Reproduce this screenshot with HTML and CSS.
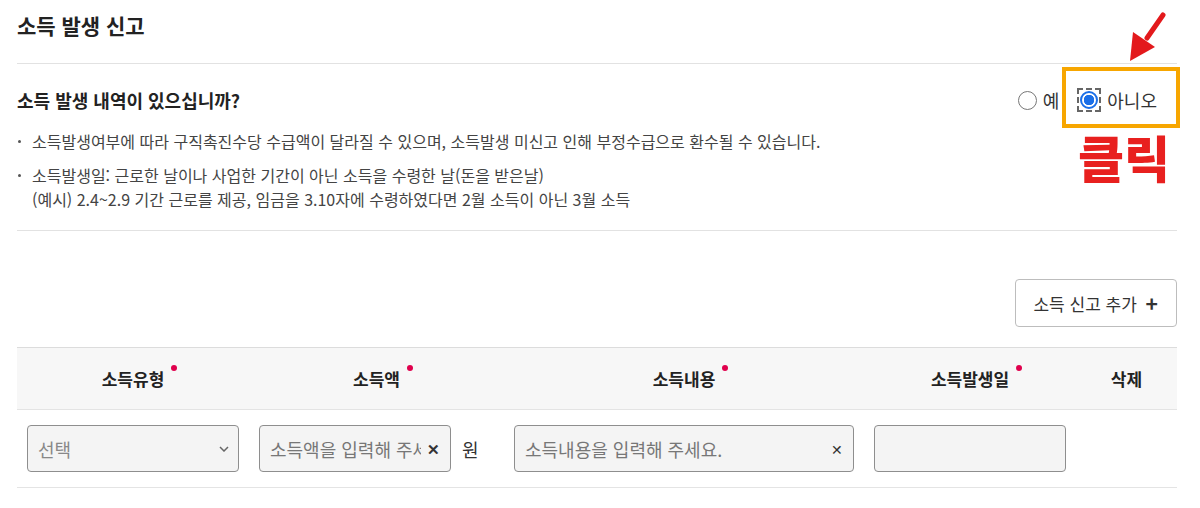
FILE: index.html
```html
<!DOCTYPE html>
<html lang="ko">
<head>
  <meta charset="utf-8">
  <title>소득 발생 신고</title>
  <link rel="stylesheet" href="styles.css">
</head>
<body>
  <div class="page">
    <h1 class="title">소득 발생 신고</h1>

    <div class="question-row">
      <h2 class="question">소득 발생 내역이 있으십니까?</h2>
      <div class="radio-group">
        <label class="radio">
          <span class="radio-mark"></span>
          <span>예</span>
        </label>
        <label class="radio">
          <span class="focus-ring"><span class="radio-mark checked"></span></span>
          <span>아니오</span>
        </label>
      </div>
    </div>

    <ul class="notes">
      <li>소득발생여부에 따라 구직촉진수당 수급액이 달라질 수 있으며, 소득발생 미신고 인해 부정수급으로 환수될 수 있습니다.</li>
      <li>소득발생일: 근로한 날이나 사업한 기간이 아닌 소득을 수령한 날(돈을 받은날)<br>(예시) 2.4~2.9 기간 근로를 제공, 임금을 3.10자에 수령하였다면 2월 소득이 아닌 3월 소득</li>
    </ul>

    <div class="actions">
      <button type="button" class="add-btn">소득 신고 추가 <span class="plus">+</span></button>
    </div>

    <table class="income-table">
      <colgroup>
        <col style="width:232px">
        <col style="width:255px">
        <col style="width:360px">
        <col style="width:212px">
        <col>
      </colgroup>
      <thead>
        <tr>
          <th><span class="req">소득유형</span></th>
          <th><span class="req">소득액</span></th>
          <th><span class="req">소득내용</span></th>
          <th><span class="req">소득발생일</span></th>
          <th>삭제</th>
        </tr>
      </thead>
      <tbody>
        <tr>
          <td>
            <div class="field select">
              <span class="placeholder">선택</span>
              <svg class="chevron" width="10" height="6" viewBox="0 0 10 6"><path d="M1 1l4 4 4-4" fill="none" stroke="#666" stroke-width="1.5"/></svg>
            </div>
          </td>
          <td>
            <div class="amount">
              <div class="field">
                <input type="text" placeholder="소득액을 입력해 주세요.">
                <span class="clear bold">&#x2715;</span>
              </div>
              <span class="unit">원</span>
            </div>
          </td>
          <td>
            <div class="field">
              <input type="text" placeholder="소득내용을 입력해 주세요.">
              <span class="clear">&#x2715;</span>
            </div>
          </td>
          <td>
            <div class="field"></div>
          </td>
          <td></td>
        </tr>
      </tbody>
    </table>

    <!-- annotation overlay -->
    <div class="highlight"></div>
    <div class="click-label">클릭</div>
    <svg class="arrow" width="60" height="60" viewBox="0 0 60 60">
      <line x1="48" y1="9" x2="32" y2="32" stroke="#e3191c" stroke-width="5" stroke-linecap="round"/>
      <polygon points="15,55 18,26 40,41" fill="#e3191c"/>
    </svg>
  </div>
</body>
</html>
```

FILE: styles.css
```css
* {
  box-sizing: border-box;
}

body {
  margin: 0;
  background: #fff;
  font-family: "Noto Sans CJK KR", "Noto Sans", sans-serif;
  color: #222;
}

.page {
  position: relative;
  padding: 0 23px 0 17px;
}

.title {
  margin: 0;
  padding: 11px 0 23px;
  font-size: 21px;
  line-height: 29px;
  font-weight: 700;
  border-bottom: 1px solid #e2e2e2;
}

.question-row {
  display: flex;
  justify-content: space-between;
  align-items: center;
  margin-top: 23px;
}

.question {
  margin: 0;
  font-size: 18px;
  line-height: 24px;
  font-weight: 700;
  color: #222;
}

.radio-group {
  display: flex;
  gap: 18px;
  margin-right: 20px;
}

.radio {
  display: flex;
  align-items: center;
  gap: 6px;
  font-size: 18px;
  color: #333;
}

.radio-mark {
  display: block;
  width: 19px;
  height: 19px;
  border: 1.5px solid #777;
  border-radius: 50%;
  background: #fff;
}

.focus-ring {
  display: block;
  padding: 1px;
  border: 2px dashed #666;
}

.radio-mark.checked {
  width: 18px;
  height: 18px;
  border: 2px solid #1a6fe8;
  background: radial-gradient(circle, #1a6fe8 0 5px, #fff 5.5px);
}

.notes {
  list-style: none;
  margin: 16px 0 0;
  padding: 0 0 19px;
  border-bottom: 1px solid #e2e2e2;
}

.notes li {
  position: relative;
  padding-left: 15px;
  font-size: 16px;
  line-height: 24px;
  color: #444;
}

.notes li + li {
  margin-top: 10px;
}

.notes li::before {
  content: "";
  position: absolute;
  left: 1px;
  top: 11px;
  width: 3px;
  height: 3px;
  border-radius: 50%;
  background: #555;
}

.actions {
  display: flex;
  justify-content: flex-end;
  margin-top: 48px;
}

.add-btn {
  height: 48px;
  padding: 0 18px 0 17px;
  border: 1px solid #bdbdbd;
  border-radius: 4px;
  background: #fff;
  font-family: inherit;
  font-size: 17px;
  color: #333;
}

.add-btn .plus {
  margin-left: 4px;
  font-size: 21px;
  font-weight: 700;
  vertical-align: -1px;
}

.income-table {
  width: 100%;
  margin-top: 20px;
  border-collapse: collapse;
  table-layout: fixed;
}

.income-table th {
  height: 62px;
  background: #f7f7f7;
  border-top: 1px solid #dcdcdc;
  border-bottom: 1px solid #e4e4e4;
  font-size: 17px;
  font-weight: 700;
  color: #222;
  text-align: center;
}

.req {
  position: relative;
}

.req::after {
  content: "";
  position: absolute;
  right: -13px;
  top: -1px;
  width: 6px;
  height: 6px;
  border-radius: 50%;
  background: #e0004d;
}

.income-table td {
  height: 78px;
  padding: 0 10px;
  border-bottom: 1px solid #e4e4e4;
}

.field {
  display: flex;
  align-items: center;
  height: 47px;
  padding: 0 10px;
  border: 1px solid #8e8e8e;
  border-radius: 4px;
  background: #f4f4f4;
}

.field input {
  flex: 1;
  min-width: 0;
  border: none;
  background: transparent;
  font-family: inherit;
  font-size: 18px;
  color: #333;
  outline: none;
  padding: 0;
}

.field input::placeholder {
  color: #777;
}

.select {
  justify-content: space-between;
  padding-right: 9px;
}

.placeholder {
  font-size: 18px;
  color: #888;
}

.clear {
  margin-left: 6px;
  font-size: 14px;
  color: #333;
}

.clear.bold {
  font-weight: 700;
  font-size: 15px;
}

.amount {
  display: flex;
  align-items: center;
  gap: 11px;
}

.amount .field {
  width: 192px;
}

.unit {
  font-size: 18px;
  color: #333;
}

.highlight {
  position: absolute;
  left: 1062px;
  top: 67px;
  width: 118px;
  height: 61px;
  border: 4px solid #f7a600;
}

.click-label {
  position: absolute;
  left: 1078px;
  top: 124px;
  font-size: 50px;
  line-height: 64px;
  font-weight: 900;
  color: #e8201f;
}

.arrow {
  position: absolute;
  left: 1115px;
  top: 6px;
}
```
